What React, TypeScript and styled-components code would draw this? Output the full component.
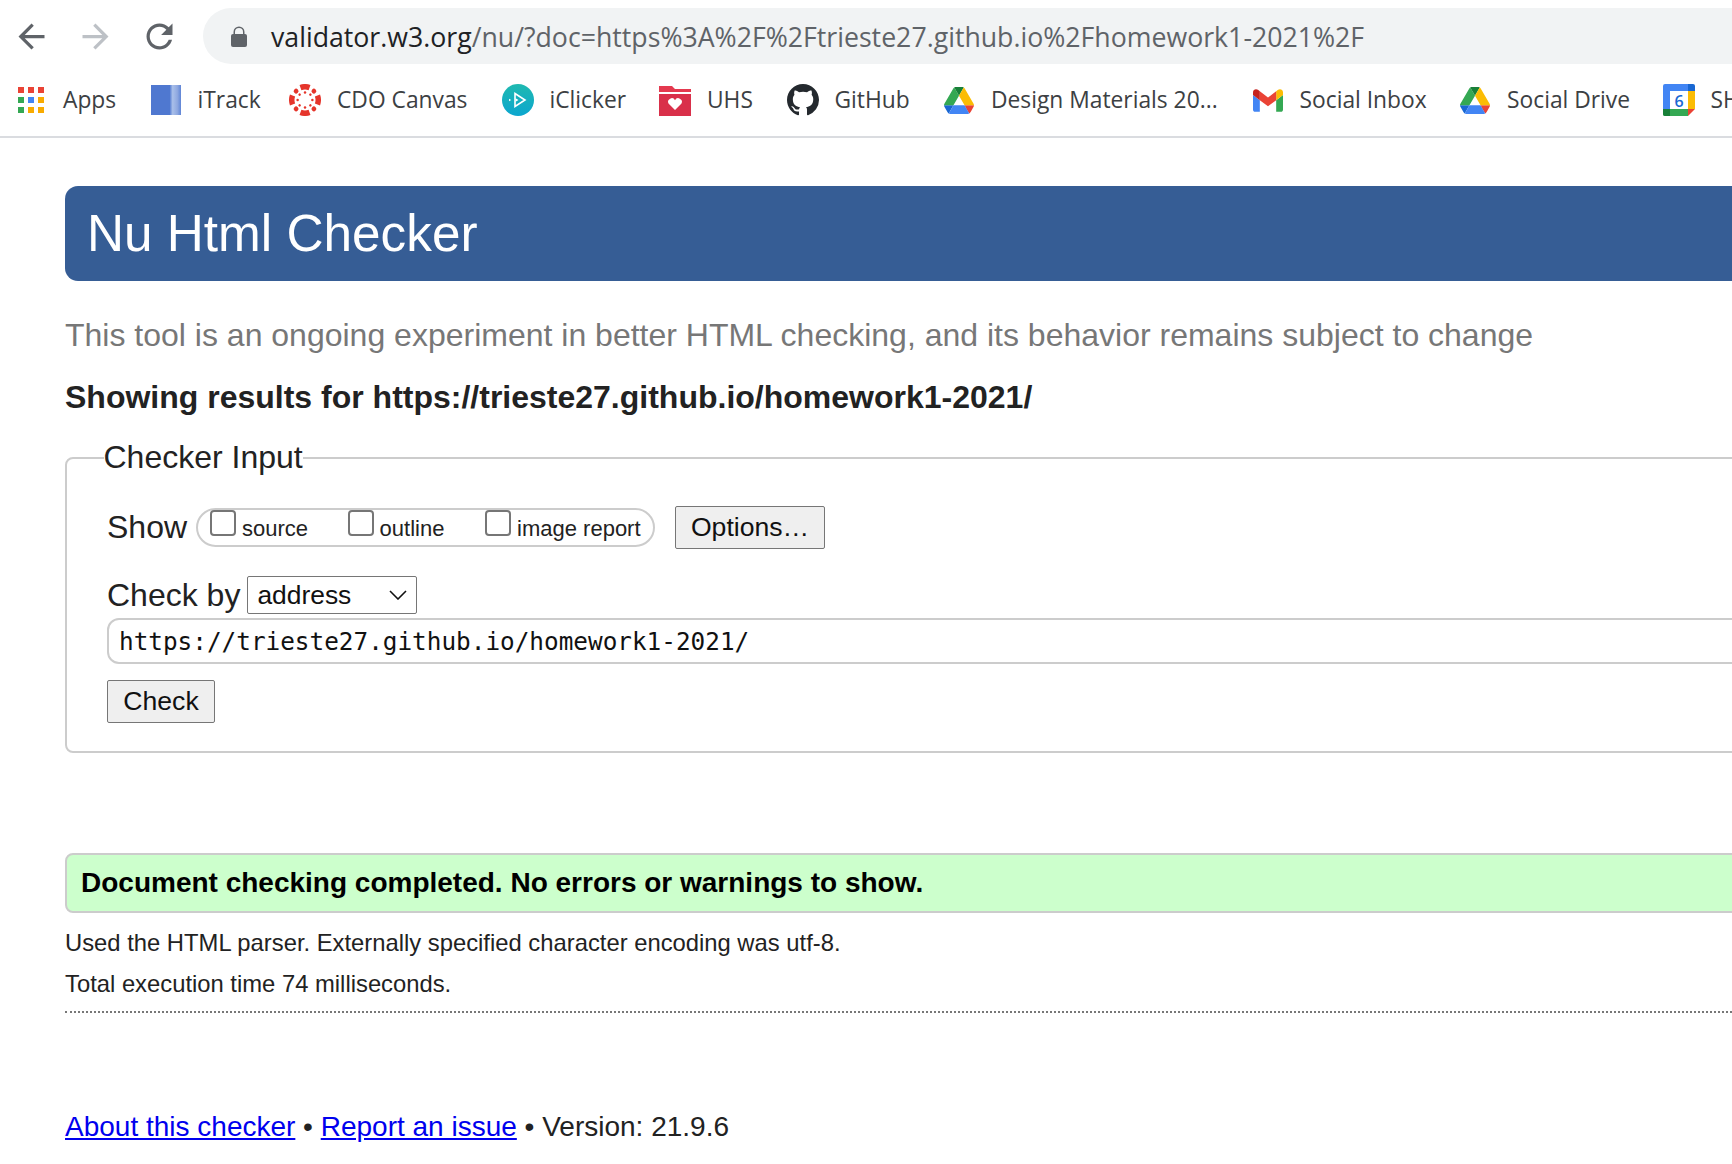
import React from 'react'
import styled, { createGlobalStyle } from 'styled-components'

const GlobalStyle = createGlobalStyle`
	html, body {
		margin: 0;
		padding: 0;
		height: 1164px;
		overflow: hidden;
		background: #fff;
	}
	body {
		font-family: "Liberation Sans", Arial, sans-serif;
		color: #222;
	}
`

const BackIcon = ({ color }: { color: string }) => (
	<NavIcon viewBox="0 0 24 24" fill={color}>
		<path d="M20 11H7.83l5.59-5.59L12 4l-8 8 8 8 1.41-1.41L7.83 13H20v-2z" />
	</NavIcon>
)

const ForwardIcon = ({ color }: { color: string }) => (
	<NavIcon viewBox="0 0 24 24" fill={color}>
		<path d="M4 11h12.17l-5.59-5.59L12 4l8 8-8 8-1.41-1.41L16.17 13H4v-2z" />
	</NavIcon>
)

const ReloadIcon = ({ color }: { color: string }) => (
	<NavIcon viewBox="0 0 24 24" fill={color}>
		<path d="M17.65 6.35C16.2 4.9 14.21 4 12 4c-4.42 0-7.99 3.58-7.99 8s3.57 8 7.99 8c3.73 0 6.84-2.55 7.73-6h-2.08c-.82 2.33-3.04 4-5.65 4-3.31 0-6-2.69-6-6s2.69-6 6-6c1.66 0 3.14.69 4.22 1.78L13 11h7V4l-2.35 2.35z" />
	</NavIcon>
)

const LockIcon = () => (
	<svg width="18" height="21" viewBox="0 0 18 21" fill="#5f6368">
		<path d="M3.5 8V6a5.5 5.5 0 0 1 11 0v2H13V6a4 4 0 0 0-8 0v2z" />
		<rect x="1" y="8" width="16" height="13" rx="2" />
	</svg>
)

const AppsIcon = () => {
	const colors = ['#ea4335', '#ea4335', '#ea4335', '#34a853', '#4285f4', '#f9ab00', '#34a853', '#f9ab00', '#f9ab00']
	return (
		<svg width="26" height="26" viewBox="0 0 26 26">
			{colors.map((c, i) => (
				<rect key={i} x={(i % 3) * 10} y={Math.floor(i / 3) * 10} width="6" height="6" fill={c} />
			))}
		</svg>
	)
}

const ITrackIcon = () => (
	<svg width="30" height="30" viewBox="0 0 30 30">
		<defs>
			<linearGradient id="itrack-fade" x1="0" x2="1" y1="0" y2="0">
				<stop offset="0" stopColor="#4f78d0" />
				<stop offset="0.62" stopColor="#4f78d0" />
				<stop offset="0.72" stopColor="#a9bfe9" />
				<stop offset="0.88" stopColor="#8ea8e0" />
				<stop offset="1" stopColor="#5f85d6" />
			</linearGradient>
		</defs>
		<rect width="30" height="30" fill="url(#itrack-fade)" />
	</svg>
)

const CanvasIcon = () => (
	<svg width="32" height="32" viewBox="-16 -16 32 32" fill="#e5352b">
		{[0, 90, 180, 270].map(a => (
			<g key={a} transform={`rotate(${a})`}>
				<path d="M-5.47 -15.03A16 16 0 0 1 5.47 -15.03L3.6 -9.87A10.5 10.5 0 0 0 -3.6 -9.87Z" />
				<circle cx="0" cy="-7.4" r="1.25" />
			</g>
		))}
		{[45, 135, 225, 315].map(a => (
			<g key={a} transform={`rotate(${a})`}>
				<circle cx="0" cy="-12.6" r="2.4" />
				<circle cx="0" cy="-7.6" r="1.25" />
			</g>
		))}
	</svg>
)

const ClickerIcon = () => (
	<svg width="32" height="32" viewBox="0 0 32 32">
		<defs>
			<linearGradient id="clicker-fill" x1="0" x2="0" y1="0" y2="1">
				<stop offset="0" stopColor="#1fb9b0" />
				<stop offset="1" stopColor="#0ba6cf" />
			</linearGradient>
		</defs>
		<circle cx="16" cy="16" r="16" fill="url(#clicker-fill)" />
		<path d="M13 9.5 23 16 13 22.5z" fill="none" stroke="#fff" strokeWidth="1.6" />
		<path d="M7 14.8 9.2 16 7 17.2z" fill="#fff" />
		<path d="M13.5 14.2 16.5 16l-3 1.8z" fill="#fff" />
	</svg>
)

const FolderIcon = () => (
	<svg width="32" height="32" viewBox="0 0 32 32">
		<path d="M0 2h13l3 3h16v3H0z" fill="#e4394f" />
		<path d="M0 10h32v22H0z" fill="#d9304a" />
		<path d="M16 27l-6.5-6.5a3.4 3.4 0 0 1 6.5-3.2 3.4 3.4 0 0 1 6.5 3.2z" fill="#fff" transform="translate(0 -1)" />
	</svg>
)

const GithubIcon = () => (
	<svg width="32" height="32" viewBox="0 0 16 16" fill="#24292e">
		<path d="M8 0C3.58 0 0 3.58 0 8c0 3.54 2.29 6.53 5.47 7.59.4.07.55-.17.55-.38 0-.19-.01-.82-.01-1.49-2.01.37-2.53-.49-2.69-.94-.09-.23-.48-.94-.82-1.13-.28-.15-.68-.52-.01-.53.63-.01 1.08.58 1.23.82.72 1.21 1.87.87 2.33.66.07-.52.28-.87.51-1.07-1.78-.2-3.64-.89-3.64-3.95 0-.87.31-1.59.82-2.15-.08-.2-.36-1.02.08-2.12 0 0 .67-.21 2.2.82.64-.18 1.32-.27 2-.27.68 0 1.36.09 2 .27 1.53-1.04 2.2-.82 2.2-.82.44 1.1.16 1.92.08 2.12.51.56.82 1.27.82 2.15 0 3.07-1.87 3.75-3.65 3.95.29.25.54.73.54 1.48 0 1.07-.01 1.93-.01 2.2 0 .21.15.46.55.38A8.013 8.013 0 0016 8c0-4.42-3.58-8-8-8z" />
	</svg>
)

const DriveIcon = () => (
	<svg width="30" height="27" viewBox="0 0 87.3 78">
		<path d="m6.6 66.85 3.85 6.65c.8 1.4 1.95 2.5 3.3 3.3l13.75-23.8h-27.5c0 1.55.4 3.1 1.2 4.5z" fill="#1967d2" />
		<path d="m43.65 25-13.75-23.8c-1.35.8-2.5 1.9-3.3 3.3l-25.4 44a9.06 9.06 0 0 0 -1.2 4.5h27.5z" fill="#34a853" />
		<path d="m73.55 76.8c1.35-.8 2.5-1.9 3.3-3.3l1.6-2.75 7.65-13.25c.8-1.4 1.2-2.95 1.2-4.5h-27.502l5.852 11.5z" fill="#ea4335" />
		<path d="m43.65 25 13.75-23.8c-1.35-.8-2.9-1.2-4.5-1.2h-18.5c-1.6 0-3.15.45-4.5 1.2z" fill="#188038" />
		<path d="m59.8 53h-32.3l-13.75 23.8c1.35.8 2.9 1.2 4.5 1.2h50.8c1.6 0 3.15-.45 4.5-1.2z" fill="#4285f4" />
		<path d="m73.4 26.5-12.7-22c-.8-1.4-1.95-2.5-3.3-3.3l-13.75 23.8 16.15 28h27.45c0-1.55-.4-3.1-1.2-4.5z" fill="#fbbc04" />
	</svg>
)

const GmailIcon = () => (
	<svg width="30" height="23" viewBox="52 42 88 66">
		<path d="M58 108h14V74L52 59v43c0 3.32 2.69 6 6 6" fill="#4285f4" />
		<path d="M120 108h14c3.32 0 6-2.69 6-6V59l-20 15" fill="#34a853" />
		<path d="M120 48v26l20-15v-8c0-7.42-8.47-11.65-14.4-7.2" fill="#fbbc04" />
		<path d="M72 74V48l24 18 24-18v26L96 92" fill="#ea4335" />
		<path d="M52 51v8l20 15V48l-5.6-4.2c-5.94-4.45-14.4-.22-14.4 7.2" fill="#c5221f" />
	</svg>
)

const CalendarIcon = () => (
	<svg width="32" height="32" viewBox="0 0 32 32">
		<path d="M2 0h24v7H7v18H0V2a2 2 0 0 1 2-2z" fill="#4285f4" />
		<path d="M25 0h5a2 2 0 0 1 2 2v5h-7z" fill="#1967d2" />
		<rect x="25" y="7" width="7" height="18" fill="#fbbc04" />
		<path d="M7 25h18v7H2a2 2 0 0 1-2-2v-5z" fill="#34a853" />
		<path d="M0 25h7v7H2a2 2 0 0 1-2-2z" fill="#188038" />
		<path d="M25 25h7l-7 7z" fill="#ea4335" />
		<text x="16" y="22.5" textAnchor="middle" fontSize="16" fontWeight="600" fill="#1967d2" fontFamily="'Open Sans', sans-serif">6</text>
	</svg>
)

const bookmarks = [
	{ label: 'Apps', icon: <AppsIcon />, width: 53 },
	{ label: 'iTrack', icon: <ITrackIcon />, width: 58 },
	{ label: 'CDO Canvas', icon: <CanvasIcon />, width: 131 },
	{ label: 'iClicker', icon: <ClickerIcon />, width: 76 },
	{ label: 'UHS', icon: <FolderIcon />, width: 46 },
	{ label: 'GitHub', icon: <GithubIcon />, width: 75 },
	{ label: 'Design Materials 20...', icon: <DriveIcon />, width: 227 },
	{ label: 'Social Inbox', icon: <GmailIcon />, width: 126 },
	{ label: 'Social Drive', icon: <DriveIcon />, width: 122 },
	{ label: 'SHS', icon: <CalendarIcon />, width: 60 }
]

export default function App() {
	return (
		<>
			<GlobalStyle />
			<Screen>
				<Toolbar>
					<NavGroup>
						<BackIcon color="#5f6368" />
						<ForwardIcon color="#bdc1c6" />
						<ReloadIcon color="#5f6368" />
					</NavGroup>
					<Omnibox>
						<LockIcon />
						<UrlText>
							<UrlHost>validator.w3.org</UrlHost>/nu/?doc=https%3A%2F%2Ftrieste27.github.io%2Fhomework1-2021%2F
						</UrlText>
					</Omnibox>
				</Toolbar>
				<BookmarkBar>
					{bookmarks.map((b, i) => (
						<Bookmark key={i}>
							<BookmarkIcon>{b.icon}</BookmarkIcon>
							<BookmarkLabel $width={b.width}>{b.label}</BookmarkLabel>
						</Bookmark>
					))}
				</BookmarkBar>
				<Page>
					<Title>Nu Html Checker</Title>
					<Subtitle>
						This tool is an ongoing experiment in better HTML checking, and its behavior remains subject to change
					</Subtitle>
					<ResultsFor>Showing results for https://trieste27.github.io/homework1-2021/</ResultsFor>
					<InputFieldset>
						<InputLegend>Checker Input</InputLegend>
						<ShowRow>
							<FieldLabel>Show</FieldLabel>
							<ShowPill>
								<ShowOption>
									<Checkbox type="checkbox" />
									<OptionText>source</OptionText>
								</ShowOption>
								<ShowOption>
									<Checkbox type="checkbox" />
									<OptionText>outline</OptionText>
								</ShowOption>
								<ShowOption>
									<Checkbox type="checkbox" />
									<OptionText>image report</OptionText>
								</ShowOption>
							</ShowPill>
							<OptionsButton type="button">Options…</OptionsButton>
						</ShowRow>
						<CheckByRow>
							<FieldLabel>Check by</FieldLabel>
							<ModeSelect defaultValue="address">
								<option value="address">address</option>
								<option value="file">file upload</option>
								<option value="text">text input</option>
							</ModeSelect>
						</CheckByRow>
						<UrlInput type="text" defaultValue="https://trieste27.github.io/homework1-2021/" />
						<CheckButton type="button">Check</CheckButton>
					</InputFieldset>
					<SuccessBar>Document checking completed. No errors or warnings to show.</SuccessBar>
					<DetailsBlock>
						<Details>Used the HTML parser. Externally specified character encoding was utf-8.</Details>
						<Details>Total execution time 74 milliseconds.</Details>
					</DetailsBlock>
					<DottedRule />
					<Footer>
						<FooterLink href="#">About this checker</FooterLink> • <FooterLink href="#">Report an issue</FooterLink> • Version: 21.9.6
					</Footer>
				</Page>
			</Screen>
		</>
	)
}

const Screen = styled.div`
	width: 1732px;
	height: 1164px;
	overflow: hidden;
`

const Toolbar = styled.div`
	display: flex;
	align-items: center;
	height: 72px;
	padding-left: 12px;
	box-sizing: border-box;
	width: 2000px;
`

const NavGroup = styled.div`
	display: flex;
	align-items: center;
	gap: 25px;
	margin-right: 24px;
`

const NavIcon = styled.svg`
	width: 39px;
	height: 39px;
	display: block;
`

const Omnibox = styled.div`
	display: flex;
	align-items: center;
	flex: 1;
	height: 56px;
	padding-left: 27px;
	border-radius: 28px;
	background: #f1f3f4;
	box-sizing: border-box;
`

const UrlText = styled.div`
	margin-left: 23px;
	font-family: "Open Sans", "Noto Sans", sans-serif;
	font-size: 26.7px;
	color: #5f6368;
	white-space: nowrap;
`

const UrlHost = styled.span`
	color: #202124;
`

const BookmarkBar = styled.div`
	display: flex;
	align-items: center;
	gap: 33.5px;
	width: 2000px;
	height: 66px;
	padding: 0 0 8px 15px;
	box-sizing: border-box;
	border-bottom: 2px solid #dadce0;
`

const Bookmark = styled.div`
	display: flex;
	align-items: center;
	gap: 16px;
	flex: none;
`

const BookmarkIcon = styled.div`
	display: flex;
	align-items: center;
	justify-content: center;
	width: 32px;
	height: 32px;
`

const BookmarkLabel = styled.div<{ $width: number }>`
	width: ${p => p.$width}px;
	padding-bottom: 2px;
	font-family: "Open Sans", "Noto Sans", sans-serif;
	font-size: 22.8px;
	color: #3c4043;
	white-space: nowrap;
`

const Page = styled.div`
	width: 2000px;
	padding: 48px 0 0 65px;
	box-sizing: border-box;
`

const Title = styled.h1`
	margin: 0;
	height: 95px;
	padding-left: 22px;
	border-radius: 13px 0 0 13px;
	background: #365d95;
	color: #fff;
	font-size: 51.3px;
	font-weight: 400;
	line-height: 95px;
`

const Subtitle = styled.p`
	margin: 31px 0 0;
	color: #777;
	font-size: 32px;
	line-height: 46px;
	white-space: nowrap;
`

const ResultsFor = styled.h2`
	margin: 16px 0 0;
	color: #222;
	font-size: 32px;
	font-weight: 700;
	line-height: 46px;
	white-space: nowrap;
`

const InputFieldset = styled.fieldset`
	margin: 19px 0 0;
	padding: 30px 0 30px 40px;
	min-inline-size: 0;
	height: 314px;
	box-sizing: border-box;
	border: 2px solid #ccc;
	border-radius: 8px 0 0 8px;
`

const InputLegend = styled.legend`
	padding: 0;
	margin-left: -3.5px;
	font-size: 32px;
	line-height: 37px;
	color: #222;
`

const ShowRow = styled.div`
	display: flex;
	align-items: center;
	height: 43px;
`

const FieldLabel = styled.span`
	font-size: 32px;
	line-height: 37px;
	color: #222;
`

const ShowPill = styled.div`
	display: flex;
	align-items: flex-start;
	width: 459px;
	height: 39px;
	margin: 0 20px 0 9px;
	padding-left: 12px;
	border: 2px solid #ccc;
	border-radius: 20px;
	box-sizing: border-box;
`

const ShowOption = styled.label`
	display: flex;
	align-items: flex-start;
	gap: 6px;
	width: 137.5px;
	flex: none;
`

const Checkbox = styled.input`
	appearance: none;
	width: 26px;
	height: 26px;
	margin: 0;
	flex: none;
	box-sizing: border-box;
	border: 2px solid #767676;
	border-radius: 4px;
	background: #fff;
`

const OptionText = styled.span`
	margin-top: 6px;
	font-size: 22px;
	line-height: 25px;
	color: #222;
	white-space: nowrap;
`

const FormButton = styled.button`
	height: 43px;
	padding: 0;
	border: 1px solid #767676;
	border-radius: 2px;
	background: #efefef;
	color: #111;
	font-family: "Liberation Sans", Arial, sans-serif;
	font-size: 26.6px;
`

const OptionsButton = styled(FormButton)`
	width: 150px;
`

const CheckButton = styled(FormButton)`
	display: block;
	width: 108px;
	margin-top: 16px;
`

const CheckByRow = styled.div`
	display: flex;
	align-items: center;
	height: 38px;
	margin-top: 27px;
`

const ModeSelect = styled.select`
	appearance: none;
	width: 170px;
	height: 38px;
	margin-left: 7px;
	padding-left: 9px;
	border: 1px solid #767676;
	border-radius: 2px;
	background: #fff url("data:image/svg+xml,%3Csvg xmlns='http://www.w3.org/2000/svg' width='18' height='10' viewBox='0 0 18 10'%3E%3Cpath d='M1 1l8 8 8-8' fill='none' stroke='%23111' stroke-width='1.6'/%3E%3C/svg%3E") no-repeat right 9px center;
	color: #111;
	font-family: "Liberation Sans", Arial, sans-serif;
	font-size: 26.4px;
`

const UrlInput = styled.input`
	display: block;
	width: 1800px;
	height: 46px;
	margin-top: 4px;
	padding: 0 10px;
	box-sizing: border-box;
	border: 2px solid #ccc;
	border-radius: 12px;
	outline: none;
	color: #111;
	font-family: "DejaVu Sans Mono", "Liberation Mono", monospace;
	font-size: 24.35px;
`

const SuccessBar = styled.div`
	margin-top: 100px;
	height: 60px;
	padding-left: 14px;
	box-sizing: border-box;
	border: 2px solid #ccc;
	border-radius: 8px 0 0 8px;
	background: #ccffcc;
	color: #000;
	font-size: 28px;
	font-weight: 700;
	line-height: 55px;
	white-space: nowrap;
`

const DetailsBlock = styled.div`
	margin-top: 6px;
`

const Details = styled.p`
	margin: 0;
	padding-top: 6px;
	font-size: 23.8px;
	line-height: 35px;
	color: #222;
	white-space: nowrap;
`

const DottedRule = styled.div`
	margin-top: 10px;
	border-top: 2px dotted #777;
`

const Footer = styled.div`
	margin-top: 96px;
	font-size: 28px;
	line-height: 35px;
	color: #222;
	white-space: nowrap;
`

const FooterLink = styled.a`
	color: #0000ee;
`
